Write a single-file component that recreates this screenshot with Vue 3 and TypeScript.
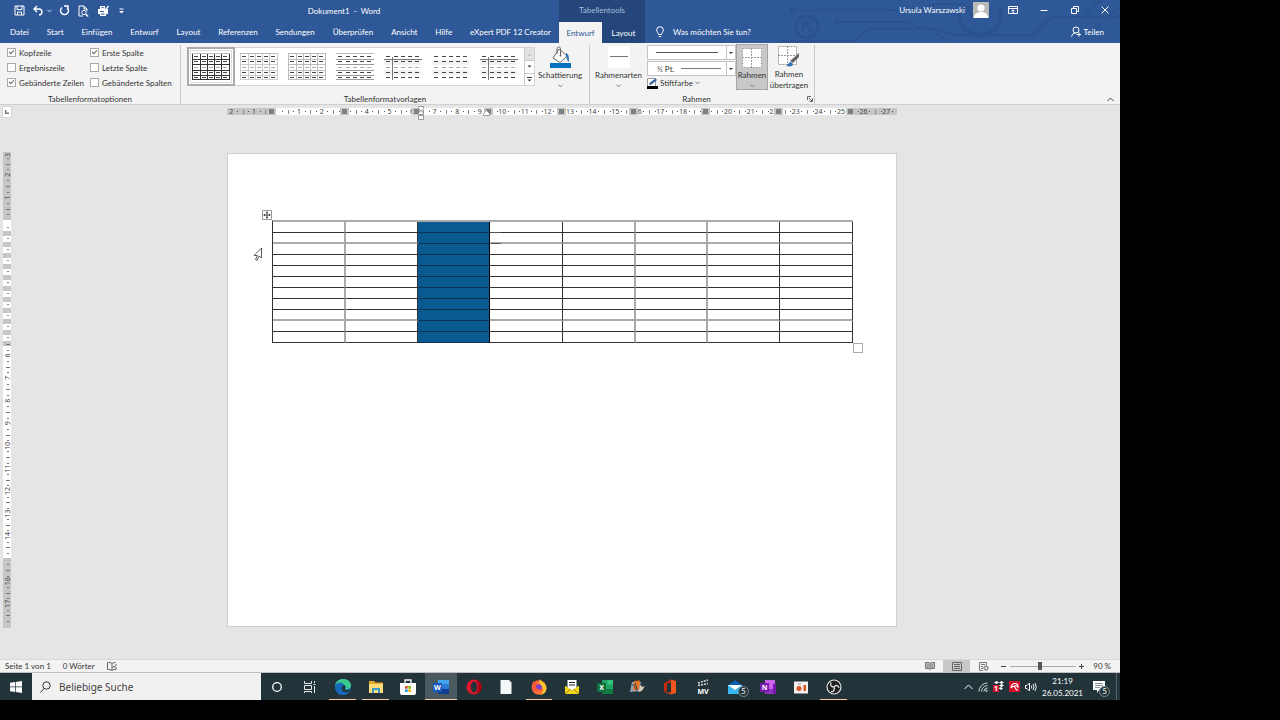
<script setup lang="ts">
import { ref } from 'vue'

const tabs: string[] = ['Datei', 'Start', 'Einfügen', 'Entwurf', 'Layout', 'Referenzen', 'Sendungen', 'Überprüfen', 'Ansicht', 'Hilfe', 'eXpert PDF 12 Creator']

interface Option { id: string; label: string; on: boolean }
const options = ref<Option[]>([
  { id: 'header-row', label: 'Kopfzeile', on: true },
  { id: 'first-col', label: 'Erste Spalte', on: true },
  { id: 'total-row', label: 'Ergebniszeile', on: false },
  { id: 'last-col', label: 'Letzte Spalte', on: false },
  { id: 'banded-rows', label: 'Gebänderte Zeilen', on: true },
  { id: 'banded-cols', label: 'Gebänderte Spalten', on: false },
])
const zoom = ref(45)
const search = ref('')

/* Table style thumbnails: grid lines plus five by five text dashes */
interface Thumb { v: number[]; h: number[]; line: string; soft?: string }
const thumbs: Thumb[] = [
  { v: [0, 8, 15, 22, 29, 37], h: [0, 6, 11, 17, 22, 26], line: '#333' },
  { v: [0, 8, 15, 22, 29, 37], h: [0, 6, 11, 17, 22, 26], line: '#ccc' },
  { v: [0, 8, 15, 22, 29, 37], h: [0, 6, 11, 17, 22, 26], line: '#bbb' },
  { v: [], h: [0, 6, 11, 17, 22, 26], line: '#999' },
  { v: [8], h: [6], line: '#777', soft: '#f2f2f2' },
  { v: [], h: [], line: '#777', soft: '#f2f2f2' },
  { v: [8], h: [6], line: '#777', soft: '#f2f2f2' },
]
const dashX = [2, 10, 17, 24, 31]
const dashY = [4, 9, 15, 20, 25]

/* Rulers: one centimetre is 22.58 px at the current zoom */
const CM = 22.58
const ORIGIN = 49.5
const hNumbers = Array.from({ length: 30 }, (_, i) => i - 2)
  .filter((n) => ![0, 3, 19].includes(n))
  .map((n) => ({ x: ORIGIN + n * CM, t: String(Math.abs(n)) }))
  .filter((n) => n.x < 664)
const hTicks = Array.from({ length: 119 }, (_, i) => i - 8)
  .filter((q) => q % 4 !== 0)
  .map((q) => ({ x: Math.round(ORIGIN + (q * CM) / 4), half: q % 2 === 0 }))
  .filter((q) => q.x > 2 && q.x < 668)
const hStops = [44, 117, 189, 261, 334, 406, 478, 551, 623]

const vNumbers = [-3, -2, -1, 6, 7, 8, 9, 10, 11, 12, 13, 14, 16, 17].map((n) => ({
  y: Math.max(3, 68 + n * CM),
  t: String(Math.abs(n)),
}))
const vTicks = Array.from({ length: 83 }, (_, i) => i - 11)
  .filter((q) => q % 4 !== 0 && (q < 0 || q > 21))
  .map((q) => ({ y: Math.round(68 + (q * CM) / 4), half: q % 2 === 0 }))
  .filter((q) => q.y < 476)
const vBands = Array.from({ length: 11 }, (_, i) => 79 + i * 11)

const rows = Array.from({ length: 11 }, (_, i) => i)
const cols = Array.from({ length: 8 }, (_, i) => i)
</script>

<template>
  <div class="screen">
    <div class="desktop">
      <header class="head">
        <div class="head-main">
          <div class="title-row">
            <div class="quick">
              <button aria-label="Speichern"><svg width="11" height="11" viewBox="0 0 11 11" fill="none" stroke="#fff"><path d="M1 1h9v9H1z" /><path d="M3 1v3.500h5V1M3.500 10V7h4v3" /></svg></button>
              <button aria-label="Rückgängig"><svg width="10" height="11" viewBox="0 0 10 11" fill="none" stroke="#fff" stroke-width="1.400"><path d="M4 1L1 4l3 3M1.300 4H6a2.800 2.800 0 010 5.800" /></svg></button>
              <button aria-label="Verlauf" class="tiny"><svg width="5" height="4" viewBox="0 0 5 4" fill="none" stroke="#dde6f4"><path d="M.5.8l2 2 2-2" /></svg></button>
              <button aria-label="Wiederholen"><svg width="11" height="11" viewBox="0 0 11 11" fill="none" stroke="#fff" stroke-width="1.400"><path d="M3 2.500a4 4 0 105 0M5 1h4v4" /></svg></button>
              <button aria-label="Seitenansicht"><svg width="11" height="12" viewBox="0 0 11 12" fill="none" stroke="#fff"><path d="M5 11H1V1h5l3 3v2M6 1v3h3" /><circle cx="6" cy="7.500" r="2.200" /><path d="M7.700 9.200l2.500 2.300" stroke-width="1.400" /></svg></button>
              <button aria-label="Schnelldruck"><svg width="12" height="12" viewBox="0 0 12 12"><path d="M3 4V1h5v3h3v5H9v2H3V9H1V4z" fill="#fff" /><path d="M4.500 2.500h2M3 6.500h4M4 9h3.500" stroke="#2f5898" /><path d="M7 3.500L8.500 5l3-4" fill="none" stroke="#fff" stroke-width="1.300" /></svg></button>
              <button aria-label="Anpassen" class="tiny"><svg width="5" height="6" viewBox="0 0 5 6"><path d="M.5 1h4" stroke="#fff" /><path d="M0 3h5L2.500 5.500z" fill="#fff" /></svg></button>
            </div>
            <div class="doc-title">Dokument1&nbsp; -&nbsp; Word</div>
          </div>
          <nav class="tabs">
            <button v-for="t in tabs" :key="t">{{ t }}</button>
          </nav>
        </div>
        <div class="context">
          <div class="context-label">Tabellentools</div>
          <nav class="context-tabs">
            <button class="active">Entwurf</button>
            <button>Layout</button>
          </nav>
        </div>
        <div class="head-end">
          <svg class="circuit" width="340" height="42" viewBox="0 0 340 42" fill="none" stroke="#274d86" stroke-width="2">
            <circle cx="13" cy="10" r="2" /><path d="M15 10h95" stroke-width="1" />
            <circle cx="27" cy="27" r="11" stroke-width="3" /><path d="M23 32V22h9M23 22l9 10" stroke-width="2" />
            <circle cx="57" cy="22" r="2" /><path d="M59 22h70l10 6h11l25 7h78l18-18h69" />
            <path d="M0 41h74l15-12h60l18 12" stroke-width="1.500" />
            <path d="M180 8a21 21 0 1040 0" stroke-width="4" /><path d="M188 6a12 12 0 1024 0" />
            <path d="M304 40l36-34M298 22l22-22M108 10h34l12-6h30" stroke-width="1.500" />
          </svg>
          <div class="window-row">
            <span class="user">Ursula Warszawski</span>
            <svg class="avatar" width="16" height="16" viewBox="0 0 16 16"><path d="M0 0h16v16H0z" fill="#b9b9b5" /><circle cx="8" cy="6" r="3.600" fill="#fff" /><path d="M1 16c0-4 3-6 7-6s7 2 7 6z" fill="#fff" /></svg>
            <button aria-label="Menüband-Anzeigeoptionen"><svg width="10" height="8" viewBox="0 0 10 8" fill="none" stroke="#fff"><path d="M.5.5h9v7h-9zM.5 2.500h9M5 7V4M3.500 5L5 3.800 6.500 5" /></svg></button>
            <button aria-label="Minimieren"><svg width="8" height="8" viewBox="0 0 8 8" stroke="#fff"><path d="M.5 4.500h7" /></svg></button>
            <button aria-label="Wiederherstellen"><svg width="8" height="8" viewBox="0 0 8 8" fill="none" stroke="#fff"><path d="M.5 2.500h5v5h-5zM2.500 2V.5h5v5H6" /></svg></button>
            <button aria-label="Schließen"><svg width="8" height="8" viewBox="0 0 8 8" stroke="#fff"><path d="M.5.5l7 7M7.500.5l-7 7" /></svg></button>
          </div>
          <div class="tell-row">
            <button class="tell"><svg width="8" height="12" viewBox="0 0 8 12" fill="none" stroke="#fff"><path d="M2.500 8.500C2.500 7 .7 6 .7 4a3.300 3.300 0 016.600 0c0 2-1.800 3-1.800 4.500zM2.700 10.500h2.600" /></svg>Was möchten Sie tun?</button>
            <button class="share"><svg width="11" height="11" viewBox="0 0 11 11" fill="none" stroke="#fff"><circle cx="5" cy="4" r="3" /><path d="M.7 10.500C1 8 2.500 7 4.500 7M5.500 8.500h4.500M8 6.500v4" /></svg>Teilen</button>
          </div>
        </div>
      </header>

      <section class="ribbon">
        <div class="group group-options">
          <div class="checks">
            <label v-for="o in options" :key="o.id" :for="o.id"><input :id="o.id" v-model="o.on" type="checkbox" />{{ o.label }}</label>
          </div>
          <div class="caption">Tabellenformatoptionen</div>
        </div>

        <div class="group group-styles">
          <div class="group-body">
            <div class="gallery">
              <button v-for="(t, i) in thumbs" :key="i" class="thumb" :class="{ chosen: i === 0 }" :aria-label="`Tabellenformat ${i + 1}`">
                <svg width="38" height="27" viewBox="0 0 38 27">
                  <template v-if="t.soft"><rect v-for="y in [7, 17]" :key="y" x="0" :y="y" width="37" height="5" :fill="t.soft" /></template>
                  <path v-for="x in t.v" :key="`v${x}`" :d="`M${x + 0.5} ${t.v.length === 1 ? 4 : 0}V27`" :stroke="t.line" />
                  <path v-for="y in t.h" :key="`h${y}`" :d="`M0 ${y + 0.5}H38`" :stroke="y === 0 ? '#bbb' : t.line" />
                  <template v-for="y in dashY" :key="`r${y}`">
                    <path v-for="x in dashX" :key="`d${x}`" :d="`M${x} ${y - 0.5}h4`" :stroke="y === 15 ? '#aaa' : '#444'" />
                  </template>
                </svg>
              </button>
              <div class="scrollers">
                <button aria-label="Nach oben" disabled><svg width="5" height="3" viewBox="0 0 5 3"><path d="M1 2.500h3L2.500 1z" fill="#aaa" /></svg></button>
                <button aria-label="Nach unten"><svg width="5" height="3" viewBox="0 0 5 3"><path d="M.5.5h4l-2 2z" fill="#333" /></svg></button>
                <button aria-label="Weitere"><svg width="5" height="5" viewBox="0 0 5 5"><path d="M0 .5h5" stroke="#333" /><path d="M.5 2.500h4l-2 2z" fill="#333" /></svg></button>
              </div>
            </div>
            <button class="big shade">
              <svg width="22" height="22" viewBox="0 0 22 22"><path d="M10 3l8 7-7 6.500-7-4.500z" fill="#fff" stroke="#666" /><path d="M8 8V2.500C8 .5 11.500.5 11.500 2.500V9" fill="none" stroke="#666" /><circle cx="11.500" cy="9.500" r="1" fill="#666" /><path d="M17 7c3 1 3 4 3 9-2-1-2-4-3-6z" fill="#2f74b5" /><path d="M1 17h21v5H1z" fill="#0070c0" /></svg>
              <span>Schattierung</span>
              <svg class="caret" width="5" height="4" viewBox="0 0 5 4"><path d="M.5 1l2 1.500 2-1.500" /></svg>
            </button>
          </div>
          <div class="caption">Tabellenformatvorlagen</div>
        </div>

        <div class="group group-borders">
          <div class="group-body">
            <button class="big kinds">
              <svg width="22" height="22" viewBox="0 0 22 22"><path d="M0 0h22v22H0z" fill="#fff" /><path d="M2 10.500h18" stroke="#777" /></svg>
              <span>Rahmenarten</span>
              <svg class="caret" width="5" height="4" viewBox="0 0 5 4"><path d="M.5 1l2 1.500 2-1.500" /></svg>
            </button>
            <div class="pens">
              <div class="combo">
                <select aria-label="Stiftart"><option></option></select>
                <i class="stroke long"></i>
                <svg class="drop" width="9" height="13" viewBox="0 0 9 13"><path d="M.5 0v13" stroke="#c4c4c4" /><path d="M3 6h4L5 8z" fill="#333" /></svg>
              </div>
              <div class="combo">
                <select aria-label="Stiftstärke"><option>½ Pt.</option></select>
                <i class="stroke short"></i>
                <svg class="drop" width="9" height="13" viewBox="0 0 9 13"><path d="M.5 0v13" stroke="#c4c4c4" /><path d="M3 6h4L5 8z" fill="#333" /></svg>
              </div>
              <button class="pen-color">
                <svg width="11" height="11" viewBox="0 0 11 11"><path d="M.5.5h8v8h-8z" fill="#fff" stroke="#999" /><path d="M2 7l1-2.500L8.500.5 10 2 4.500 6.500z" fill="#33669f" /><path d="M0 8h11v3H0z" fill="#000" /></svg>
                Stiftfarbe
                <svg class="caret" width="5" height="4" viewBox="0 0 5 4"><path d="M.5 1l2 1.500 2-1.500" /></svg>
              </button>
            </div>
            <button class="big pressed">
              <svg width="20" height="20" viewBox="0 0 20 20"><path d="M0 0h20v20H0z" fill="#fff" /><path d="M.5.5h19v19H.5zM9.500 0v20M0 9.500h20" fill="none" stroke="#999" stroke-dasharray="2 1" /></svg>
              <span>Rahmen</span>
              <svg class="caret" width="5" height="4" viewBox="0 0 5 4"><path d="M.5 1l2 1.500 2-1.500" /></svg>
            </button>
            <button class="big painter">
              <svg width="22" height="21" viewBox="0 0 22 21"><path d="M0 0h19v19H0z" fill="#fff" /><path d="M.5.5h18v18H.5zM9.500 0v19M0 9.500h19" fill="none" stroke="#999" stroke-dasharray="2 1" /><path d="M21 7v4l-6 6-3-2z" fill="#666" /><path d="M8 20c2 0 2-4 5-4l2 2c0 2-2 3-7 2z" fill="#2f74b5" /></svg>
              <span>Rahmen<br />übertragen</span>
            </button>
          </div>
          <div class="caption">Rahmen</div>
          <button class="launcher" aria-label="Rahmenoptionen"><svg width="6" height="6" viewBox="0 0 6 6" fill="none" stroke="#666"><path d="M.5 4V.5H4M2 2l3 3M5.500 2.500v3h-3" /></svg></button>
        </div>
        <button class="collapse" aria-label="Menüband reduzieren"><svg width="7" height="5" viewBox="0 0 7 5" fill="none" stroke="#444"><path d="M.5 4l3-3 3 3" /></svg></button>
      </section>

      <main class="work">
        <div class="ruler-row">
          <button class="tabstop" aria-label="Tabstopp"><svg width="4" height="4" viewBox="0 0 4 4" fill="none" stroke="#777" stroke-width="1.500"><path d="M.7 0v3.300H4" /></svg></button>
          <div class="center">
            <svg class="hruler" width="670" height="16" viewBox="0 0 670 16">
              <path d="M0 3h670v7H0z" fill="#c6c6c6" /><path d="M49 3h571v7H49z" fill="#fff" />
              <path v-for="k in hTicks" :key="k.x" :d="k.half ? `M${k.x + 0.5} 5v4` : `M${k.x + 0.5} 6v1`" :stroke="k.half ? '#888' : '#555'" />
              <text v-for="n in hNumbers" :key="n.x" :x="n.x" y="9" text-anchor="middle">{{ n.t }}</text>
              <g v-for="s in hStops" :key="s"><path :d="`M${s - 4} 3h9v7h-9z`" fill="#c6c6c6" /><path :d="`M${s - 2} 4h5v5h-5z`" fill="#808080" /></g>
              <path d="M191.500 1.500h5v2l-2.500 2.500-2.500-2.500zM191.500 9.500v-1.500l2.500-2.500 2.500 2.500v1.500zM191.500 10.500h5v4h-5z" fill="#fff" stroke="#999" />
              <path d="M256.500 10.500v-2l3-3 3 3v2z" fill="#fff" stroke="#999" />
            </svg>
          </div>
        </div>
        <div class="canvas">
          <svg class="vruler" width="8" height="476" viewBox="0 0 8 476">
            <path d="M0 0h8v476H0z" fill="#c6c6c6" /><path d="M0 68h8v338H0z" fill="#fff" />
            <rect v-for="b in vBands" :key="b" x="0" :y="b" width="8" height="5" fill="#c6c6c6" />
            <path v-for="b in vBands" :key="`t${b}`" :d="`M4 ${b - 3.5}h2`" stroke="#888" />
            <path v-for="k in vTicks" :key="k.y" :d="k.half ? `M3 ${k.y + 0.5}h4` : `M4 ${k.y + 0.5}h2`" stroke="#777" />
            <text v-for="n in vNumbers" :key="n.y" :transform="`translate(7 ${n.y}) rotate(-90)`" text-anchor="middle">{{ n.t }}</text>
          </svg>
          <div class="center">
            <article class="page">
              <div class="table-wrap">
                <table>
                  <tbody>
                    <tr v-for="r in rows" :key="r" :class="{ soft: r === 1 || r === 8 }">
                      <td v-for="c in cols" :key="c" :class="{ fill: c === 2, faint: c === 0 || c === 4 || c === 5, wide: c === 0 || c === 3 || c === 4 || c === 7 }"></td>
                    </tr>
                  </tbody>
                </table>
                <svg class="mover" width="10" height="10" viewBox="0 0 10 10" fill="none"><path d="M.5.5h9v9h-9z" fill="#fff" stroke="#999" /><path d="M5 1.500v7M1.500 5h7M4 2.500h2M4 7.500h2M2.500 4v2M7.500 4v2" stroke="#444" /></svg>
                <span class="resizer"></span>
                <svg class="pointer" width="9" height="15" viewBox="0 0 9 15"><path d="M8.500 1v10L6 9l-2 4.500-1.500-1L4.500 8.500H1z" fill="#fff" stroke="#333" stroke-width=".8" /></svg>
                <span class="nib first"></span><span class="nib second"></span>
              </div>
            </article>
          </div>
        </div>
      </main>

      <footer class="status">
        <span>Seite 1 von 1</span>
        <span>0 Wörter</span>
        <svg width="10" height="9" viewBox="0 0 10 9" fill="none" stroke="#666"><path d="M5 1.500C4 .5 2 .5.5.5v7c1.500 0 3.500 0 4.500 1V1.500C6 .7 7 .5 8.500.5M5 8.500c1-1 2-1 4-1V5M6 4l1 1.500L9.500 2" /></svg>
        <div class="views">
          <button aria-label="Lesemodus"><svg width="10" height="8" viewBox="0 0 10 8" fill="#bbb" stroke="#777"><path d="M.5.5H4l1 1 1-1h3.500v6H6l-1 1-1-1H.5zM5 1.500v6M2 3h1.500M2 5h1.500M6.500 3H8M6.500 5H8" /></svg></button>
          <button aria-label="Seitenlayout" class="on"><svg width="10" height="9" viewBox="0 0 10 9" fill="none" stroke="#666"><path d="M.5.5h9v8h-9zM2 2.500h6M2 4.500h6M2 6.500h6" /></svg></button>
          <button aria-label="Weblayout"><svg width="10" height="9" viewBox="0 0 10 9" fill="none" stroke="#777"><path d="M4 8.500H.5v-8h7V3M2 2.500h4M2 4.500h2M2 6.500h2" /><circle cx="7" cy="6" r="2.200" fill="#ccc" /></svg></button>
        </div>
        <button class="step" aria-label="Verkleinern"><svg width="5" height="5" viewBox="0 0 5 5" stroke="#444"><path d="M0 2.500h5" /></svg></button>
        <input v-model="zoom" class="slider" type="range" min="0" max="100" aria-label="Zoom" />
        <button class="step" aria-label="Vergrößern"><svg width="5" height="5" viewBox="0 0 5 5" stroke="#444"><path d="M0 2.500h5M2.500 0v5" /></svg></button>
        <span class="percent">90 %</span>
      </footer>

      <div class="taskbar">
        <button class="start" aria-label="Start"><svg width="12" height="12" viewBox="0 0 12 12" fill="#fff"><path d="M0 1.800L5 1v4.600H0zM5.700.9L12 0v5.600H5.700zM0 6.300h5V11l-5-.8zM5.700 6.300H12V12l-6.300-.9z" /></svg></button>
        <label class="search" for="task-search">
          <svg width="11" height="12" viewBox="0 0 11 12" fill="none" stroke="#333"><circle cx="6.500" cy="4.500" r="3.700" /><path d="M4 7.500L.5 11.500" /></svg>
          <input id="task-search" v-model="search" type="text" placeholder="Beliebige Suche" />
        </label>
        <div class="apps">
          <button aria-label="Cortana"><svg viewBox="0 0 16 16"><circle cx="8" cy="8" r="4.300" fill="none" stroke="#fff" stroke-width="1.300" /></svg></button>
          <button aria-label="Taskansicht"><svg viewBox="0 0 16 16" fill="none" stroke="#e8e8e8"><path d="M2.500 2v2.500h7V2M2.500 6.500h7v4h-7zM2.500 14v-1.500h7V14M12.500 2v2M12.500 7v7M11.500 5.500h2" /></svg></button>
          <button aria-label="Edge" class="open"><svg viewBox="0 0 16 16"><circle cx="8" cy="8" r="8" fill="#1b78cf" /><path d="M0 7C1 1.500 5-.3 9 .1c4.500.4 7 3.400 7 6.400 0 3-3 4.500-6 3.500 1.500-3-1-5.500-4-5.500C3.500 4.500 1 5.500 0 7z" fill="#3ccb8f" /><path d="M0 7C1.500 3 7 2 9 6c-3 0-4.500 3-2.500 6 1.500 2.200 5 2.500 8 .5-2 3-5 3.900-8 3.300C2.500 15 0 12 0 7z" fill="#1668b8" /><path d="M9 6c2 1 2 3 1 4.500 1.500 1 4 .5 5.500-1-.3 2-1.500 3.300-3 3.800C9 14 6 12 6.500 9 6.700 7.500 7.600 6.500 9 6z" fill="#21353d" /></svg></button>
          <button aria-label="Explorer" class="open"><svg viewBox="0 0 16 16"><path d="M1 2h5l1.500 1.500H15V14H1z" fill="#e3a92c" /><path d="M1 5h14v9H1z" fill="#fbdc77" /><path d="M4 14V9h8v5h-2v-3H6v3z" fill="#3d9bd4" /></svg></button>
          <button aria-label="Store"><svg viewBox="0 0 16 16"><path d="M5 4V1h6v3" fill="none" stroke="#fff" stroke-width="1.300" /><path d="M0 4h16v10q0 2-2 2H2q-2 0-2-2z" fill="#fff" /><path d="M5 7h2.700v2.700H5z" fill="#e5502c" /><path d="M8.300 7H11v2.700H8.300z" fill="#7fb900" /><path d="M5 10.300h2.700V13H5z" fill="#1aa0e8" /><path d="M8.300 10.300H11V13H8.300z" fill="#f8b700" /></svg></button>
          <button aria-label="Word" class="open current"><svg viewBox="0 0 16 16"><path d="M5 1h11v14H5z" fill="#2b7cd3" /><path d="M5 1h11v4H5z" fill="#41a5ee" /><path d="M5 10h11v5H5z" fill="#103f91" /><path d="M0 4h9v9H0z" fill="#185abd" /><text x="4.500" y="11" class="logo">W</text></svg></button>
          <button aria-label="Opera"><svg viewBox="0 0 16 16"><ellipse cx="8" cy="8" rx="7.500" ry="7.500" fill="#e0182d" /><path d="M10 .8c7.500 2 7.500 12.400 0 14.400 3-3 3-11.400 0-14.400z" fill="#a70014" /><ellipse cx="8" cy="8" rx="3.200" ry="5.500" fill="#22333a" /></svg></button>
          <button aria-label="Dokument"><svg viewBox="0 0 16 16"><path d="M2.500 1H11l2.500 2.500V15h-11z" fill="#f4f7f7" /><path d="M11 1v2.500h2.500z" fill="#b8c4c8" /></svg></button>
          <button aria-label="Firefox" class="open"><svg viewBox="0 0 16 16"><circle cx="8" cy="8.500" r="7.300" fill="#ff7139" /><path d="M9 0c1 3 6 4 6.500 9 0 4-3 6.700-7 7 4-2 5-6 2-9C8 5 8 2 9 0z" fill="#ffca2c" /><circle cx="7.500" cy="8.500" r="3.300" fill="#7a3fd1" /><path d="M1 8c0-3 1-4 1.500-6 1.500 2 3 2 5 3-2 1-3 1-2.500 3s3 3 5 2c-1 4-9 4-9-2z" fill="#ff5a36" /></svg></button>
          <button aria-label="E-Mail"><svg viewBox="0 0 16 16"><path d="M3.500 1h9v10h-9z" fill="#fff" /><path d="M5 3.500h6M5 6h6" stroke="#222" /><path d="M1 6.500l7 5 7-5V15H1z" fill="#f2d71b" /><path d="M1 15l5.500-5M15 15L9.500 10" stroke="#77690a" stroke-width=".8" /></svg></button>
          <button aria-label="Excel"><svg viewBox="0 0 16 16"><path d="M5 1h11v14H5z" fill="#21a366" /><path d="M10.500 1H16v4.500h-5.500z" fill="#33c481" /><path d="M5 10h11v5H5z" fill="#107c41" /><path d="M0 4h9v9H0z" fill="#0f703b" /><text x="4.500" y="11" class="logo">X</text></svg></button>
          <button aria-label="Bildbearbeitung"><svg viewBox="0 0 16 16"><path d="M3 3h9l-2 9-9 1z" fill="#8fa6bf" /><path d="M5 2l6-.5-1 9-6 1z" fill="#e87424" /><path d="M3 6c3-2 2 5 6 5M6 4l2 6" fill="none" stroke="#444" /><path d="M9 13c2-3 1-6 3-7l1 2 3-1c-2 3-3 6-7 6z" fill="#d9cbb2" /></svg></button>
          <button aria-label="Office"><svg viewBox="0 0 16 16"><path d="M2 4l7-3.500v2.700L5 4.500v7L2 13z" fill="#c5290f" /><path d="M2 13l7 .5V15.500z" fill="#e43e1b" /><path d="M9 .5L14 2v12l-5 1.500z" fill="#f2561d" /></svg></button>
          <button aria-label="Movie"><svg viewBox="0 0 16 16"><path d="M3 4l10-3M3 6.500L13 4.500" stroke="#ddd" stroke-width="1.500" stroke-dasharray="2 1" /><text x="8" y="14.500" class="logo">MV</text></svg></button>
          <button aria-label="Mail"><svg viewBox="0 0 16 16"><path d="M1 6l7-5 7 5z" fill="#0f62b0" /><path d="M1 6h14v9H1z" fill="#38b6f1" /><path d="M1 6h14l-7 5z" fill="#fff" /></svg><span class="badge">5</span></button>
          <button aria-label="OneNote"><svg viewBox="0 0 16 16"><path d="M5 1h10v14H5z" fill="#ca64ea" /><path d="M13 5h3v10h-3z" fill="#7719aa" /><path d="M5 10h8v5H5z" fill="#9332bf" /><path d="M0 4h9v9H0z" fill="#7719aa" /><text x="4.500" y="11" class="logo">N</text></svg></button>
          <button aria-label="Recorder"><svg viewBox="0 0 16 16"><path d="M1 2.500h14v12H1z" fill="#f2efec" /><circle cx="6" cy="9.500" r="2.500" fill="#d9542c" /><path d="M10.500 6h2.500v6h-2.500z" fill="#d9542c" /><path d="M5 5h3" stroke="#999" /></svg></button>
          <button aria-label="OBS" class="open"><svg viewBox="0 0 16 16"><circle cx="8" cy="8" r="7" fill="#222" stroke="#e2e2e2" stroke-width="1.200" /><path d="M8 8c-3 0-4-2-3-4.500M8 8c2-2.500 4.500-1.500 5 .8M8 8c1 3-.5 5-3 4.500" fill="none" stroke="#ddd" stroke-width="1.400" /></svg></button>
        </div>
        <div class="tray">
          <button aria-label="Ausgeblendete Symbole"><svg width="9" height="6" viewBox="0 0 9 6" fill="none" stroke="#fff"><path d="M.5 5l4-4 4 4" /></svg></button>
          <button aria-label="WLAN"><svg width="10" height="10" viewBox="0 0 10 10" fill="none" stroke="#ddd"><path d="M1 9.500C1 5 5 1 9.500 1M3.500 9.500c0-3 3-6 6-6M6 9.500c0-2 1.500-3.500 3.500-3.500" /><circle cx="8.500" cy="8.700" r=".7" /></svg></button>
          <button aria-label="Dropbox"><svg width="11" height="11" viewBox="0 0 11 11"><path d="M1 1.500L3.500 0 6 1.500 3.500 3zM6 1.500L8.500 0 11 1.500 8.500 3zM6 4.500L8.500 3 11 4.500 8.500 6zM5.500 7L8 6l2 1.500L8 9z" fill="#fff" /><path d="M0 4h6v7H0z" fill="#d5142b" /><text x="3" y="10" class="logo">1</text></svg></button>
          <button aria-label="Avira"><svg width="11" height="11" viewBox="0 0 11 11"><path d="M0 0h11v11H0z" fill="#d2112c" /><path d="M2 7c0-3 2-4.500 4-4.500S9 4 9 6C7.500 4.500 6 4.500 5 5.500 4 5 2.500 6 2 7zM5.500 5.500L7.500 9H9" fill="none" stroke="#fff" stroke-width="1.100" /></svg></button>
          <button aria-label="Lautstärke"><svg width="12" height="10" viewBox="0 0 12 10" fill="none" stroke="#eee"><path d="M.5 3.500H2L4.500 1v8L2 6.500H.5zM6.300 3.500q1 1.500 0 3M8 2q2 3 0 6M10 1q2.500 4 0 8" /></svg></button>
          <div class="clock"><span>21:19</span><span>26.05.2021</span></div>
          <button class="notes" aria-label="Benachrichtigungen"><svg width="12" height="12" viewBox="0 0 12 12"><path d="M0 0h12v9H6l-2 3V9H0z" fill="#fff" /><path d="M2 2.500h8M2 4.500h8M2 6.500h5" stroke="#8b979b" /></svg><span class="badge">5</span></button>
        </div>
      </div>
    </div>
  </div>
</template>

<style>
html, body { margin: 0; background: #000; }
</style>

<style scoped>
.screen { box-sizing: border-box; min-height: 100vh; padding: 0 160px 20px 0; background: #000; display: flex; font-family: Lato, "Noto Sans", sans-serif; font-size: 8px; line-height: 10px; color: #333; }
.desktop { flex: 1; min-width: 0; display: flex; flex-direction: column; background: #e5e5e5; }
button { font: inherit; color: inherit; background: none; border: 0; padding: 0; margin: 0; display: inline-flex; align-items: center; justify-content: center; white-space: nowrap; }
svg { display: block; flex: none; }

.head { display: flex; height: 43px; background: #2f5898; color: #fff; }
.head-main { width: 559px; display: flex; flex-direction: column; }
.title-row { height: 21px; display: flex; align-items: center; }
.quick { display: flex; align-items: center; gap: 8px; padding-left: 14px; }
.quick .tiny { margin: 0 -1px 0 -4px; }
.quick .tiny:last-child { margin-left: 2px; }
.doc-title { flex: 1; text-align: center; padding-left: 6px; }
.tabs { flex: 1; display: flex; justify-content: space-between; align-items: center; padding: 0 8px 0 10px; }
.context { width: 86px; background: #24467a; display: flex; flex-direction: column; }
.context-label { height: 22px; line-height: 21px; text-align: center; color: #a9bede; }
.context-tabs { flex: 1; display: grid; grid-template-columns: 1fr 1fr; }
.context-tabs .active { background: #f3f3f3; color: #2f5898; }
.head-end { flex: 1; position: relative; display: flex; flex-direction: column; }
.circuit { position: absolute; right: 0; top: 0; opacity: .5; }
.window-row { position: relative; height: 20px; display: flex; align-items: center; justify-content: flex-end; padding-right: 11px; }
.user { padding-right: 8px; }
.window-row button { width: 31px; }
.window-row .avatar + button { margin-left: 8px; }
.window-row button:last-child { width: 8px; margin-left: 11px; }
.tell-row { position: relative; flex: 1; display: flex; align-items: center; justify-content: space-between; padding: 0 16px 0 11px; }
.tell { gap: 9px; }
.share { gap: 2px; }

.ribbon { display: flex; height: 61px; background: #f3f3f3; border-bottom: 1px solid #d0d0d0; }
.group { position: relative; display: flex; flex-direction: column; justify-content: space-between; margin-top: 2px; border-right: 1px solid #c8c8c8; }
.caption { text-align: center; line-height: 10px; }
.group-options { width: 180px; }
.checks { display: grid; grid-template-columns: 83px auto; padding-left: 7px; grid-auto-rows: 15px; }
.checks label { display: flex; align-items: center; gap: 3px; white-space: nowrap; }
.checks input { appearance: none; box-sizing: border-box; width: 9px; height: 9px; margin: 0; border: 1px solid #aaa; background: #fff; display: grid; place-items: center; }
.checks input:checked::after { content: ""; width: 4px; height: 2px; border: solid #666; border-width: 0 0 1px 1px; transform: rotate(-45deg); margin-bottom: 2px; }
.group-styles { width: 408px; }
.group-body { display: flex; align-items: flex-start; }
.gallery { display: flex; margin: 2px 0 0 6px; height: 39px; background: #fff; border: 1px solid #d4d4d4; border-width: 1px 1px 1px 0; box-sizing: border-box; width: 348px; }
.thumb { flex: none; box-sizing: border-box; width: 48px; }
.thumb.chosen { margin: -1px 0; border: 2px solid #aaa; outline: 1px solid #ddd; outline-offset: -4px; }
.scrollers { width: 9px; margin-left: auto; display: grid; grid-template-rows: repeat(3, 1fr); border-left: 1px solid #c8c8c8; }
.scrollers button + button { border-top: 1px solid #c8c8c8; }
.scrollers button:disabled { background: #e2e2e2; }
.big { flex-direction: column; justify-content: flex-start; gap: 2px; padding-top: 1px; }
.big span { line-height: 11px; }
.caret { fill: none; stroke: #777; }
.big .caret { margin-top: 1px; }
.shade { width: 50px; }
.group-borders { width: 224px; }
.kinds { width: 57px; }
.pens { width: 89px; display: grid; gap: 1px; }
.combo { display: grid; grid-template-columns: 1fr auto; align-items: center; height: 15px; background: #fff; border: 1px solid #c4c4c4; box-sizing: border-box; }
.combo select { grid-area: 1 / 1 / 2 / 3; appearance: none; width: 100%; height: 13px; border: 0; background: none; padding: 0 0 0 9px; font: inherit; color: inherit; }
.combo .stroke { grid-area: 1 / 1; height: 1px; background: #555; }
.combo .long { margin: 0 8px; }
.combo .short { margin: 0 5px 0 33px; background: #777; }
.combo .drop { grid-area: 1 / 2; }
.pen-color { gap: 2px; justify-content: flex-start; height: 12px; }
.pressed { box-sizing: border-box; width: 32px; height: 46px; margin-top: -1px; padding-top: 3px; background: #c8c8c8; border: 1px solid #a4a4a4; }
.painter { width: 42px; }
.group-borders .caption { padding-right: 11px; }
.launcher { position: absolute; right: 1px; bottom: 2px; }
.collapse { margin-left: auto; align-self: flex-end; padding: 0 6px 2px 0; }

.work { flex: 1; display: flex; flex-direction: column; }
.ruler-row { display: flex; height: 16px; }
.tabstop { box-sizing: border-box; width: 10px; height: 12px; margin: 1px 0 0 2px; background: #fff; border: 1px solid #d4d4d4; }
.center { flex: 1; display: flex; justify-content: center; padding-right: 8px; }
.ruler-row .center { padding-right: 9px; }
.hruler text, .vruler text { font-family: "Noto Sans", sans-serif; font-size: 7px; fill: #444; }
.canvas { flex: 1; display: flex; align-items: flex-start; padding-top: 31px; }
.vruler { margin-left: 3px; }
.canvas .center { padding-top: 1px; }
.page { box-sizing: border-box; width: 670px; height: 474px; background: #fff; border: 1px solid #d0d0d0; padding: 66px 0 0 44px; }
.table-wrap { position: relative; width: 581px; }
table { border-collapse: separate; border-spacing: 0; border-left: 1px solid #333; border-top: 2px solid #aaa; width: 581px; table-layout: fixed; box-sizing: border-box; }
td { box-sizing: border-box; height: 11px; padding: 0; width: 72px; border-right: 1px solid #333; border-bottom: 1px solid #333; }
td.wide { width: 73px; }
td.faint { border-right: 2px solid #aaa; }
.soft td { border-bottom: 2px solid #aaa; }
td.fill, .soft td.fill { background: #085a91; border-bottom: 1px solid #0c3450; border-right-color: #000; }
.mover { position: absolute; left: -10px; top: -10px; }
.resizer { position: absolute; right: -10px; bottom: -10px; box-sizing: border-box; width: 10px; height: 10px; background: #fff; border: 1px solid #aaa; }
.pointer { position: absolute; left: -19px; top: 27px; }
.nib { position: absolute; left: 219px; width: 10px; height: 1px; background: #555; }
.nib.first { top: 12px; }
.nib.second { top: 23px; }

.status { display: flex; align-items: center; height: 14px; background: #f3f3f3; border-top: 1px solid #d8d8d8; border-bottom: 1px solid #c0c0c0; box-sizing: border-box; padding: 0 9px 0 5px; gap: 12px; }
.views { margin-left: auto; display: flex; align-self: stretch; }
.views button { width: 27px; }
.views .on { background: #c8c8c8; }
.step { margin: 0 -8px 0 -8px; }
.slider { appearance: none; width: 66px; height: 9px; margin: 0; background: linear-gradient(#aaa, #aaa) center / 100% 1px no-repeat; }
.slider::-webkit-slider-thumb { appearance: none; width: 4px; height: 8px; background: #555; }
.slider + .step { margin: 0 -3px 0 -9px; }

.taskbar { display: flex; height: 27px; background: #22333a; color: #fff; }
.start { width: 32px; }
.search { box-sizing: border-box; width: 229px; display: flex; align-items: center; gap: 8px; padding-left: 8px; background: #f1f1f1; }
.search input { flex: 1; min-width: 0; border: 0; background: none; outline: 0; padding: 0; font-family: "Noto Sans", sans-serif; font-size: 10px; }
.search input::placeholder { color: #444; opacity: 1; }
.apps { width: 589px; display: grid; grid-template-columns: repeat(18, 1fr); }
.apps button { position: relative; }
.apps svg { width: 16px; height: 16px; }
.apps .open::after { content: ""; position: absolute; left: 3px; right: 3px; bottom: 0; height: 1px; background: #f6cf9c; }
.apps .current { background: #4b5a60; }
.apps .current::after { left: 0; right: 0; }
.logo { font-family: "Noto Sans", sans-serif; font-size: 7px; font-weight: 700; fill: #fff; text-anchor: middle; }
.badge { position: absolute; right: 3px; bottom: 3px; box-sizing: border-box; width: 11px; height: 11px; border: 1px solid #7d898d; border-radius: 50%; background: #22333a; font-size: 8px; line-height: 9px; text-align: center; color: #fff; }
.tray { margin-left: auto; display: flex; align-items: center; gap: 5px; padding-right: 3px; border-right: 1px solid #59686e; margin-right: 3px; }
.clock { display: flex; flex-direction: column; align-items: center; line-height: 12px; padding: 0 5px 0 0; }
.notes { position: relative; width: 20px; height: 27px; justify-content: flex-start; }
</style>
